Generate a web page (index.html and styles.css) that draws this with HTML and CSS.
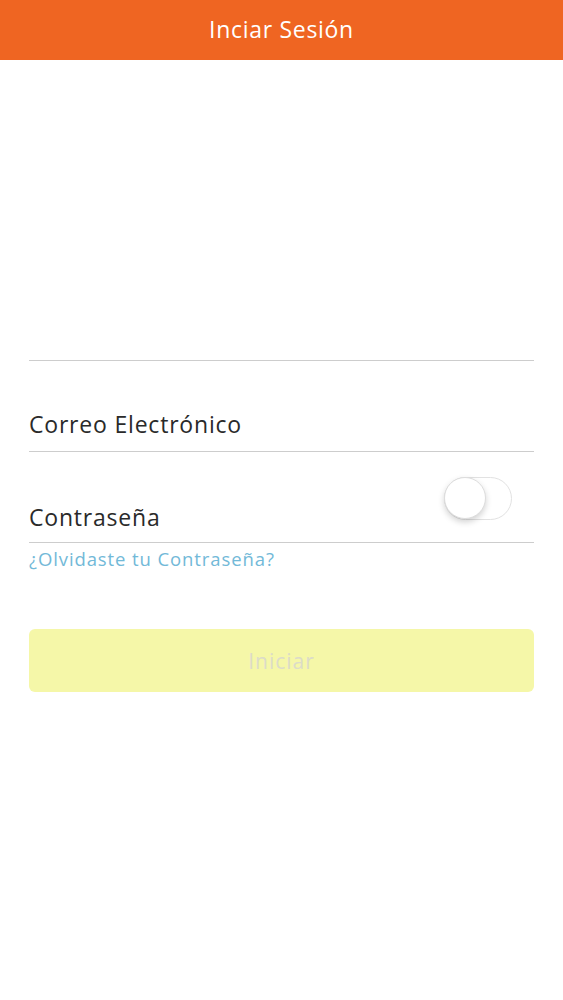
FILE: index.html
```html
<!DOCTYPE html>
<html lang="es">
<head>
<meta charset="utf-8">
<title>Inciar Sesión</title>
<link rel="stylesheet" href="styles.css">
</head>
<body>
<header class="topbar">
  <h1 class="topbar-title">Inciar Sesión</h1>
</header>
<main class="login">
  <div class="field field-blank"></div>
  <div class="field field-email">
    <span class="field-label">Correo Electrónico</span>
  </div>
  <div class="field field-password">
    <span class="field-label">Contraseña</span>
    <span class="toggle"><span class="toggle-knob"></span></span>
  </div>
  <a class="forgot" href="#">¿Olvidaste tu Contraseña?</a>
  <button class="submit" type="button">Iniciar</button>
</main>
</body>
</html>
```
FILE: styles.css
```css
* { box-sizing: border-box; }
body {
  margin: 0;
  background: #ffffff;
  font-family: "Open Sans", "Noto Sans", "Liberation Sans", sans-serif;
  color: #2b2b2b;
}
.topbar {
  height: 60px;
  background: #ef6522;
  display: flex;
  align-items: center;
  justify-content: center;
  padding-bottom: 2px;
}
.topbar-title {
  margin: 0;
  color: #ffffff;
  font-size: 23px;
  font-weight: 400;
  letter-spacing: 0.7px;
}
.login {
  padding: 0 29px;
  display: flex;
  flex-direction: column;
}
.field {
  height: 91px;
  border-bottom: 1px solid #cdcdcd;
  display: flex;
  align-items: flex-end;
  justify-content: space-between;
  padding-bottom: 12px;
}
.field-blank {
  height: 301px;
}
.field-password {
  position: relative;
  padding-bottom: 10px;
}
.field-label {
  font-size: 23px;
  line-height: 30px;
  color: #2a2a2a;
  letter-spacing: 0.8px;
}
.toggle {
  position: absolute;
  right: 22px;
  top: 25px;
  width: 68px;
  height: 43px;
  border-radius: 22px;
  border: 1.5px solid #e2e2e2;
  background: #ffffff;
}
.toggle-knob {
  position: absolute;
  left: -1px;
  top: -1px;
  width: 42px;
  height: 42px;
  border-radius: 50%;
  background: #ffffff;
  border: 1px solid #dddddd;
  box-shadow: 0 3px 6px rgba(0, 0, 0, 0.18);
}
.forgot {
  margin-top: 4px;
  font-size: 18.5px;
  line-height: 24px;
  color: #72b9d8;
  text-decoration: none;
  letter-spacing: 0.9px;
}
.submit {
  margin-top: 58px;
  height: 63px;
  border: none;
  border-radius: 6px;
  background: #f5f7a8;
  color: #dcdcc8;
  font-family: inherit;
  font-size: 21px;
  letter-spacing: 1px;
}
```
